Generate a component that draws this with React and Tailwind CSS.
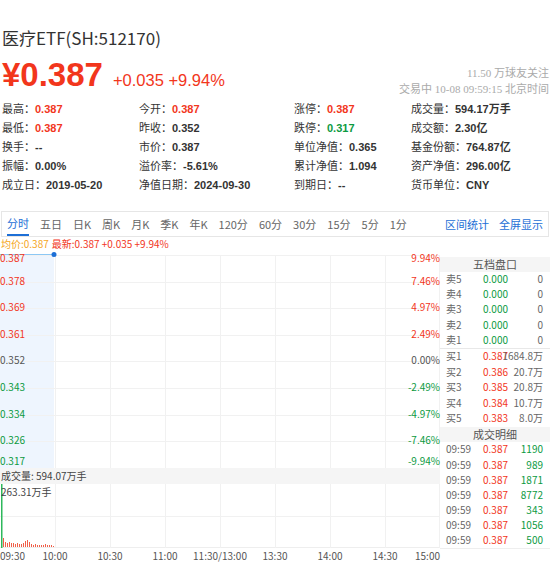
import React from 'react';

const priceLabels = [
  ['0.387', '9.94%', 'r'],
  ['0.378', '7.46%', 'r'],
  ['0.369', '4.97%', 'r'],
  ['0.361', '2.49%', 'r'],
  ['0.352', '0.00%', 'n'],
  ['0.343', '-2.49%', 'g'],
  ['0.334', '-4.97%', 'g'],
  ['0.326', '-7.46%', 'g'],
  ['0.317', '-9.94%', 'g'],
];

const colorCls = { r: 'text-[#f2361c]', n: 'text-[#555]', g: 'text-[#0c9a3f]', '': 'text-[#333]' };

const stats = [
  [['最高：', '0.387', 'r'], ['今开：', '0.387', 'r'], ['涨停：', '0.387', 'r'], ['成交量：', '594.17万手', '']],
  [['最低：', '0.387', 'r'], ['昨收：', '0.352', ''], ['跌停：', '0.317', 'g'], ['成交额：', '2.30亿', '']],
  [['换手：', '--', ''], ['市价：', '0.387', ''], ['单位净值：', '0.365', ''], ['基金份额：', '764.87亿', '']],
  [['振幅：', '0.00%', ''], ['溢价率：', '-5.61%', ''], ['累计净值：', '1.094', ''], ['资产净值：', '296.00亿', '']],
  [['成立日：', '2019-05-20', ''], ['净值日期：', '2024-09-30', ''], ['到期日：', '--', ''], ['货币单位：', 'CNY', '']],
];

const tabs = ['五日', '日K', '周K', '月K', '季K', '年K', '120分', '60分', '30分', '15分', '5分', '1分'];

const sells = [
  ['卖5', '0.000', '0'],
  ['卖4', '0.000', '0'],
  ['卖3', '0.000', '0'],
  ['卖2', '0.000', '0'],
  ['卖1', '0.000', '0'],
];
const buys = [
  ['买1', '0.387', '1684.8万'],
  ['买2', '0.386', '20.7万'],
  ['买3', '0.385', '20.8万'],
  ['买4', '0.384', '10.7万'],
  ['买5', '0.383', '8.0万'],
];
const trades = ['1190', '989', '1871', '8772', '343', '1056', '500'];

const volBars = [
  [3, 9], [5, 5], [7, 4], [9, 5], [11, 4], [13, 4], [15, 3], [17, 4], [19, 3], [21, 3], [23, 4], [25, 6], [27, 7],
  [29, 5], [31, 3], [33, 2], [35, 3], [37, 2], [39, 2], [41, 2], [43, 2], [45, 3], [47, 2], [49, 2], [51, 2], [53, 1],
];

const times = [
  ['09:30', 0, 'l'],
  ['10:00', 55, 'c'],
  ['10:30', 110, 'c'],
  ['11:00', 165, 'c'],
  ['11:30/13:00', 220, 'c'],
  ['13:30', 275, 'c'],
  ['14:00', 330, 'c'],
  ['14:30', 385, 'c'],
  ['15:00', 440, 'r'],
];

const alignCls = { l: 'absolute top-0', c: 'absolute top-0 -translate-x-1/2', r: 'absolute top-0 -translate-x-full' };

function Header() {
  return (
    <div className="flex justify-between h-[100px]">
      <div className="pl-[2px] pt-[27px]">
        <div className="text-[17px] leading-[22px] font-[family-name:'Noto_Sans_CJK_SC',sans-serif] text-[#333]">
          医疗ETF(SH:512170)
        </div>
        <div className="flex items-baseline mt-[9px]">
          <span className="text-[33px] leading-[33px] font-bold text-[#f2361c]">¥0.387</span>
          <span className="ml-[10px] text-[16.5px] text-[#f2361c]">+0.035 +9.94%</span>
        </div>
      </div>
      <div className="pt-[65px] pr-[1px] text-right text-[11px] leading-[16px] text-[#aaa] font-[family-name:'Liberation_Serif','Noto_Sans_CJK_SC',serif]">
        <div>11.50 万球友关注</div>
        <div>交易中 10-08 09:59:15 北京时间</div>
      </div>
    </div>
  );
}

function Stats() {
  return (
    <div className="grid grid-cols-[137px_155px_117px_1fr] pl-[2px]">
      {stats.flat().map(([label, value, c], i) => (
        <div key={i} className="h-[19px] leading-[19px] text-[11px] whitespace-nowrap">
          <span className="text-[#333]">{label}</span>
          <span className={`font-bold ${colorCls[c]}`}>{value}</span>
        </div>
      ))}
    </div>
  );
}

function Tabs() {
  return (
    <div className="mt-[16px] mx-[1px] h-[26px] border border-[#e6e6e6] flex items-stretch justify-between text-[11px] font-[family-name:'Noto_Sans_CJK_SC',sans-serif]">
      <div className="flex items-stretch pl-[5px] gap-[11px] text-[#666]">
        <div className="flex items-center pt-[1px] border-b-2 border-[#1d6fd6] text-[#1d6fd6]">分时</div>
        {tabs.map((t) => (
          <div key={t} className="flex items-center">
            {t}
          </div>
        ))}
      </div>
      <div className="flex items-center gap-[10px] pr-[5px] text-[#1d6fd6]">
        <span>区间统计</span>
        <span>全屏显示</span>
      </div>
    </div>
  );
}

function InfoLine() {
  return (
    <div className="h-[14px] leading-[14px] text-[10px] pl-[1px] flex gap-[3px] font-[family-name:'Noto_Sans_CJK_SC',sans-serif]">
      <span className="text-[#f5a623]">均价:0.387</span>
      <span className="text-[#f2361c]">最新:0.387 +0.035 +9.94%</span>
    </div>
  );
}

function PriceChart() {
  const lines = Array.from({ length: 9 }, (_, k) => 4 + 26.6 * k);
  return (
    <div className="relative h-[217px] w-[440px]">
      <svg className="absolute inset-0" width="440" height="217">
        <rect x="0" y="3" width="54" height="214" fill="#eef5fe" />
        {lines.map((y, k) => (
          <line key={k} x1="0" x2="440" y1={Math.round(y) + 0.5} y2={Math.round(y) + 0.5} stroke="#f1f1f1" />
        ))}
        {[55, 110, 165, 220, 275, 330, 385, 439].map((x) => (
          <line key={x} x1={x + 0.5} x2={x + 0.5} y1="4" y2="217" stroke="#f1f1f1" />
        ))}
        <line x1="0" x2="54" y1="3.5" y2="3.5" stroke="#8cc8f5" strokeWidth="1.2" />
        <circle cx="54" cy="3.5" r="2.5" fill="#1d6fd6" />
      </svg>
      {priceLabels.map(([p, pct, c], k) => {
        const top = k === 0 ? 1 : k === 8 ? 204 : lines[k] - 7;
        return (
          <React.Fragment key={k}>
            <div
              className={`absolute left-0 text-[10px] leading-[12px] font-[family-name:'Noto_Sans_CJK_SC',sans-serif] ${colorCls[c]}`}
              style={{ top }}
            >
              {p}
            </div>
            <div
              className={`absolute right-0 text-[10px] leading-[12px] font-[family-name:'Noto_Sans_CJK_SC',sans-serif] ${colorCls[c]}`}
              style={{ top }}
            >
              {pct}
            </div>
          </React.Fragment>
        );
      })}
    </div>
  );
}

function VolumeChart() {
  return (
    <div className="relative h-[64px] w-[440px]">
      <svg className="absolute inset-0" width="440" height="64">
        <line x1="0" x2="440" y1="32.5" y2="32.5" stroke="#f1f1f1" />
        <line x1="0" x2="440" y1="63.5" y2="63.5" stroke="#eeeeee" />
        {[55, 110, 165, 220, 275, 330, 385, 439].map((x) => (
          <line key={x} x1={x + 0.5} x2={x + 0.5} y1="0" y2="64" stroke="#f1f1f1" />
        ))}
        <rect x="1" y="0" width="1.5" height="64" fill="#2eb85c" />
        {volBars.map(([x, h]) => (
          <rect key={x} x={x} y={63 - h} width="1" height={h} fill="#f0604a" />
        ))}
      </svg>
      <div className="absolute left-[1px] top-[1px] text-[10px] leading-[14px] text-[#444] font-[family-name:'Noto_Sans_CJK_SC',sans-serif]">
        263.31万手
      </div>
    </div>
  );
}

function TimeAxis() {
  return (
    <div className="relative h-[16px] w-[440px] text-[10px] leading-[16px] text-[#555] font-[family-name:'Noto_Sans_CJK_SC',sans-serif]">
      {times.map(([t, x, a]) => (
        <div key={t} className={alignCls[a]} style={{ left: x }}>
          {t}
        </div>
      ))}
    </div>
  );
}

function ChartCol() {
  return (
    <div className="w-[440px] shrink-0">
      <PriceChart />
      <div className="h-[16px] leading-[16px] bg-[#f5f5f5] text-[10px] text-[#444] pl-[1px] font-[family-name:'Noto_Sans_CJK_SC',sans-serif]">
        成交量: 594.07万手
      </div>
      <VolumeChart />
      <TimeAxis />
    </div>
  );
}

function BookRow({ label, price, vol, priceCls, volCls, h }) {
  return (
    <div className={`grid grid-cols-[37px_1fr] pl-[6px] pr-[7px] ${h}`}>
      <span className="text-[#666]">{label}</span>
      <span className={`col-start-2 row-start-1 ${priceCls}`}>{price}</span>
      <span className={`col-start-2 row-start-1 justify-self-end ${volCls}`}>{vol}</span>
    </div>
  );
}

function SidePanel() {
  return (
    <div className="flex-1 pt-[6px] text-[10px] font-[family-name:'Noto_Sans_CJK_SC',sans-serif]">
      <div className="h-[15px] leading-[15px] bg-[#f5f5f5] text-center text-[11px] text-[#555]">五档盘口</div>
      {sells.map(([l, p, v]) => (
        <BookRow key={l} label={l} price={p} vol={v} priceCls="text-[#0c9a3f]" volCls="text-[#666]" h="h-[15.2px] leading-[13px] items-start" />
      ))}
      <div className="border-t border-[#e8e8e8]">
        {buys.map(([l, p, v]) => (
          <BookRow key={l} label={l} price={p} vol={v} priceCls="text-[#f2361c]" volCls="text-[#666]" h="h-[15.6px] leading-[13px] items-start" />
        ))}
      </div>
      <div className="h-[15px] leading-[15px] bg-[#f5f5f5] text-center text-[11px] text-[#555]">成交明细</div>
      <div className="border-b border-[#eeeeee]">
        {trades.map((v, i) => (
          <BookRow key={i} label="09:59" price="0.387" vol={v} priceCls="text-[#f2361c]" volCls="text-[#0c9a3f]" h="h-[15.1px] leading-[14px] items-center" />
        ))}
      </div>
    </div>
  );
}

export default function App() {
  return (
    <div className="w-[550px] h-[583px] bg-white overflow-hidden text-[#333] font-[family-name:'Liberation_Sans','Noto_Sans_CJK_SC',sans-serif]">
      <Header />
      <Stats />
      <Tabs />
      <InfoLine />
      <div className="flex">
        <ChartCol />
        <SidePanel />
      </div>
    </div>
  );
}
